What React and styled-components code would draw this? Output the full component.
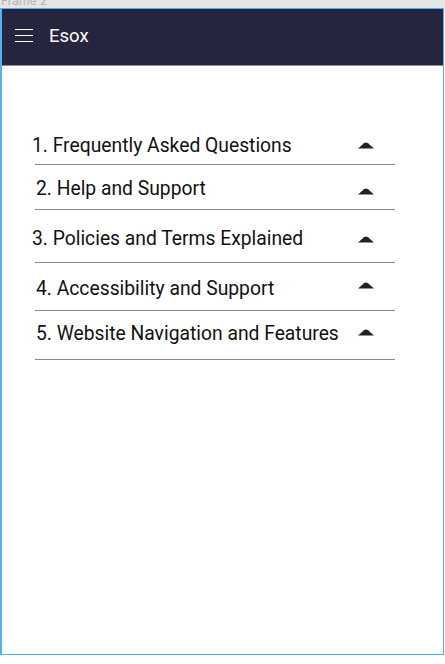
import React from "react";
import styled, { createGlobalStyle } from "styled-components";

const GlobalStyle = createGlobalStyle`
  html, body {
    margin: 0;
    padding: 0;
    background: #ffffff;
  }
  body {
    font-family: Roboto, "Liberation Sans", sans-serif;
  }
`;

const Canvas = styled.div`
  width: 445px;
  height: 664px;
  background: #ffffff;
  overflow: hidden;
`;

const TopStrip = styled.div`
  height: 8px;
  background: #e5e5e5;
  overflow: hidden;
`;

const FrameLabel = styled.div`
  font-family: Inter, Roboto, sans-serif;
  font-size: 12px;
  line-height: 12px;
  color: #b3b3b3;
  margin-top: -5px;
  padding-left: 1px;
`;

const Frame = styled.div`
  box-sizing: border-box;
  width: 444px;
  height: 647px;
  border: 1px solid #4db2f7;
  border-left-width: 2px;
  display: flex;
  flex-direction: column;
`;

const Header = styled.header`
  box-sizing: border-box;
  height: 57px;
  background: #25263d;
  border-bottom: 1px solid #8b8d99;
  display: flex;
  align-items: center;
  padding: 0 0 3px 13px;
  gap: 16px;
`;

const MenuButton = styled.div`
  width: 18px;
  display: flex;
  flex-direction: column;
  gap: 4.5px;
  span {
    display: block;
    height: 1.5px;
    background: #ffffff;
  }
`;

const Brand = styled.div`
  color: #ffffff;
  font-size: 18.5px;
  line-height: 22px;
`;

const List = styled.div`
  padding: 69px 0 0 33px;
  width: 360px;
`;

const Item = styled.div`
  display: flex;
  align-items: center;
  justify-content: space-between;
  padding-top: ${(p) => p.$top}px;
  padding-bottom: ${(p) => p.$bottom}px;
  border-bottom: 1px solid #888888;
`;

const Title = styled.div`
  font-size: 19.3px;
  line-height: 22px;
  color: #111111;
  white-space: nowrap;
  margin-left: ${(p) => p.$indent}px;
`;

const Caret = styled.svg`
  flex-shrink: 0;
  width: 16px;
  height: 7px;
  margin-right: 21px;
  position: relative;
  top: ${(p) => p.$shift}px;
`;

const items = [
  { text: "1.\u00a0Frequently Asked Questions", indent: -3, top: 0, bottom: 7, shift: -1 },
  { text: "2.\u00a0Help and Support", indent: 1, top: 13, bottom: 9, shift: 2 },
  { text: "3.\u00a0Policies and Terms Explained", indent: -3, top: 18, bottom: 12, shift: 0 },
  { text: "4.\u00a0Accessibility and Support", indent: 1, top: 15, bottom: 10, shift: -4 },
  { text: "5.\u00a0Website Navigation and Features", indent: 1, top: 12, bottom: 14, shift: -2 },
];

export default function App() {
  return (
    <Canvas>
      <GlobalStyle />
      <TopStrip>
        <FrameLabel>Frame 2</FrameLabel>
      </TopStrip>
      <Frame>
        <Header>
          <MenuButton>
            <span />
            <span />
            <span />
          </MenuButton>
          <Brand>Esox</Brand>
        </Header>
        <List>
          {items.map((item, i) => (
            <Item key={i} $top={item.top} $bottom={item.bottom}>
              <Title $indent={item.indent}>{item.text}</Title>
              <Caret $shift={item.shift} viewBox="0 0 16 7">
                <path d="M0 6.5 L6 1.2 Q8 -0.4 10 1.2 L16 6.5 Z" fill="#222222" />
              </Caret>
            </Item>
          ))}
        </List>
      </Frame>
    </Canvas>
  );
}
